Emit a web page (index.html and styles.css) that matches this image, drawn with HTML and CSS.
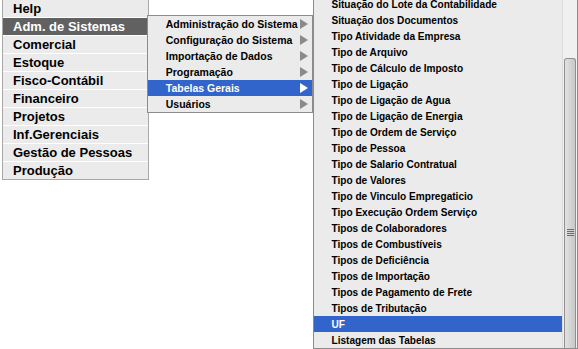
FILE: index.html
```html
<!DOCTYPE html>
<html lang="pt-BR">
<head>
  <meta charset="UTF-8" />
  <title>Menu</title>
  <link rel="stylesheet" href="styles.css">
</head>
<body>
  <div class="menus">
    <ul class="menu menu-main">
      <li>Help</li>
      <li class="open">Adm. de Sistemas</li>
      <li>Comercial</li>
      <li>Estoque</li>
      <li>Fisco-Contábil</li>
      <li>Financeiro</li>
      <li>Projetos</li>
      <li>Inf.Gerenciais</li>
      <li>Gestão de Pessoas</li>
      <li>Produção</li>
    </ul>

    <ul class="menu menu-sub">
      <li class="has-sub">Administração do Sistema</li>
      <li class="has-sub">Configuração do Sistema</li>
      <li class="has-sub">Importação de Dados</li>
      <li class="has-sub">Programação</li>
      <li class="has-sub active">Tabelas Gerais</li>
      <li class="has-sub">Usuários</li>
    </ul>

    <div class="menu-list">
      <ul class="menu menu-items">
        <li>Situação do Lote da Contabilidade</li>
        <li>Situação dos Documentos</li>
        <li>Tipo Atividade da Empresa</li>
        <li>Tipo de Arquivo</li>
        <li>Tipo de Cálculo de Imposto</li>
        <li>Tipo de Ligação</li>
        <li>Tipo de Ligação de Agua</li>
        <li>Tipo de Ligação de Energia</li>
        <li>Tipo de Ordem de Serviço</li>
        <li>Tipo de Pessoa</li>
        <li>Tipo de Salario Contratual</li>
        <li>Tipo de Valores</li>
        <li>Tipo de Vinculo Empregaticio</li>
        <li>Tipo Execução Ordem Serviço</li>
        <li>Tipos de Colaboradores</li>
        <li>Tipos de Combustíveis</li>
        <li>Tipos de Deficiência</li>
        <li>Tipos de Importação</li>
        <li>Tipos de Pagamento de Frete</li>
        <li>Tipos de Tributação</li>
        <li class="active">UF</li>
        <li>Listagem das Tabelas</li>
      </ul>
      <div class="scrollbar">
        <div class="thumb"><span class="grip"></span></div>
      </div>
    </div>
  </div>
</body>
</html>
```

FILE: styles.css
```css
* {
  box-sizing: border-box;
}

body {
  margin: 0;
  background-color: #fff;
  font-family: "Liberation Sans", Arial, sans-serif;
  color: #000;
  overflow: hidden;
  height: 349px;
}

.menus {
  display: flex;
  align-items: flex-start;
  padding-left: 2px;
}

.menu {
  list-style: none;
  margin: 0;
  padding: 0;
  background-color: #ebebeb;
}

/* Menu principal */
.menu-main {
  width: 147px;
  border: 1px solid #a8a8a8;
  border-top: none;
  font-size: 13px;
  font-weight: bold;
}

.menu-main li {
  height: 18px;
  line-height: 17px;
  padding-left: 10px;
  border-bottom: 1px solid #fff;
}

.menu-main li:last-child {
  border-bottom: none;
  height: 17px;
}

.menu-main li.open {
  background-color: #616161;
  color: #fff;
}

/* Submenu */
.menu-sub {
  width: 167px;
  margin-left: -2px;
  margin-top: 15px;
  border: 1px solid #8c8c8c;
  font-size: 10.5px;
  font-weight: bold;
  position: relative;
  z-index: 1;
}

.menu-sub li {
  height: 16px;
  line-height: 16px;
  padding-left: 18px;
  position: relative;
}

.menu-sub li.has-sub::after {
  content: "";
  position: absolute;
  right: 4px;
  top: 3px;
  border-left: 8px solid #8a8a8a;
  border-top: 5px solid transparent;
  border-bottom: 5px solid transparent;
}

.menu-sub li.active {
  background-color: #3265cc;
  color: #fff;
}

.menu-sub li.active::after {
  border-left-color: #fff;
}

/* Lista de tabelas */
.menu-list {
  display: flex;
  margin-top: -5px;
  border: 1px solid #8c8c8c;
  background-color: #ebebeb;
  width: 265px;
  height: 354px;
}

.menu-items {
  flex: 1;
  font-size: 10.1px;
  font-weight: bold;
}

.menu-items li {
  height: 16px;
  line-height: 17px;
  padding-left: 17px;
}

.menu-items li.active {
  background-color: #3265cc;
  color: #fff;
}

.scrollbar {
  width: 15px;
  background-color: #f0f0f0;
  border-left: 1px solid #dcdcdc;
  padding: 62px 1px 0 1px;
}

.thumb {
  height: 100%;
  border: 1px solid #8f8f8f;
  border-bottom: none;
  border-radius: 3px 3px 0 0;
  background: linear-gradient(to right, #e2e2e2, #d4d4d4 50%, #c8c8c8);
  display: flex;
  justify-content: center;
  padding-top: 170px;
}

.grip {
  width: 7px;
  height: 7px;
  background: repeating-linear-gradient(to bottom, #6d6d6d 0 1px, transparent 1px 2px);
}
```
